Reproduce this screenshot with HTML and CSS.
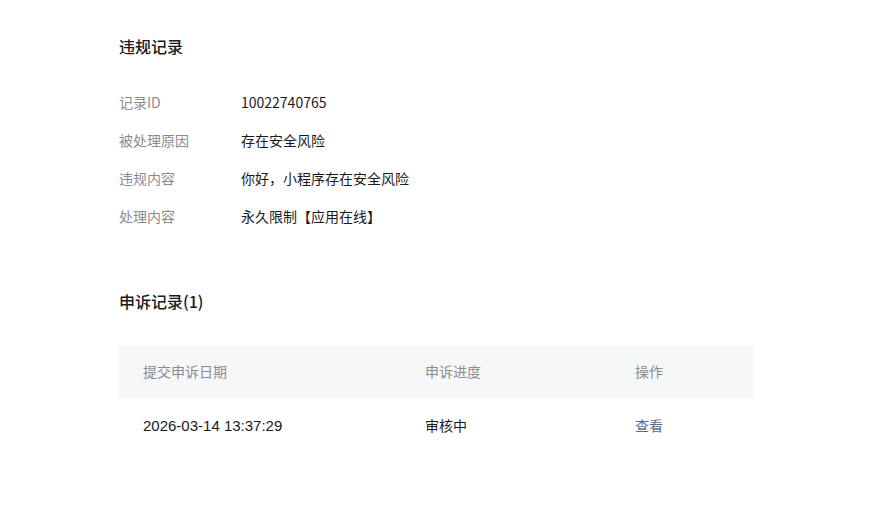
FILE: index.html
```html
<!DOCTYPE html>
<html lang="zh-CN">
<head>
  <meta charset="UTF-8" />
  <meta name="viewport" content="width=device-width, initial-scale=1" />
  <title>违规记录</title>
  <link rel="stylesheet" href="styles.css">
</head>
<body>
  <div class="page">
    <!-- 违规记录 -->
    <h2 class="titulo">违规记录</h2>
    <div class="info">
      <div class="info-linha"><span class="rotulo">记录ID</span><span class="valor">10022740765</span></div>
      <div class="info-linha"><span class="rotulo">被处理原因</span><span class="valor">存在安全风险</span></div>
      <div class="info-linha"><span class="rotulo">违规内容</span><span class="valor">你好，小程序存在安全风险</span></div>
      <div class="info-linha"><span class="rotulo">处理内容</span><span class="valor">永久限制【应用在线】</span></div>
    </div>

    <!-- 申诉记录 -->
    <h2 class="titulo titulo-apelo">申诉记录(1)</h2>
    <table class="tabela">
      <thead>
        <tr>
          <th class="col-data">提交申诉日期</th>
          <th class="col-status">申诉进度</th>
          <th>操作</th>
        </tr>
      </thead>
      <tbody>
        <tr>
          <td class="col-data data">2026-03-14 13:37:29</td>
          <td class="col-status">审核中</td>
          <td><a href="#" class="link">查看</a></td>
        </tr>
      </tbody>
    </table>
  </div>
</body>
</html>
```

FILE: styles.css
```css
body {
  margin: 0;
  background: #fff;
  font-family: "Noto Sans CJK SC", "Noto Sans", sans-serif;
  color: #1a1a1a;
  font-size: 14px;
}
.page {
  padding: 34px 0 40px 119px;
  width: 634px;
}
.titulo {
  margin: 0;
  font-size: 16px;
  line-height: 24px;
  font-weight: 500;
  color: #1a1a1a;
}
.info {
  margin-top: 33px;
  display: flex;
  flex-direction: column;
  gap: 16px;
}
.info-linha {
  display: flex;
  line-height: 22px;
}
.rotulo {
  width: 122px;
  color: #8c8c8c;
}
.valor {
  color: #1a1a1a;
}
.titulo-apelo {
  margin-top: 62px;
}
.tabela {
  margin-top: 33px;
  width: 100%;
  border-collapse: collapse;
}
.tabela th {
  background: #f6f7f9;
  height: 52px;
  padding: 0 0 3px 24px;
  box-sizing: border-box;
  text-align: left;
  font-weight: 400;
  color: #8c8c8c;
}
.tabela td {
  height: 54px;
  padding: 0 0 0 24px;
  text-align: left;
  color: #1a1a1a;
}
.tabela td.data {
  font-family: "Liberation Sans", Arial, sans-serif;
  font-size: 15px;
}
.col-data {
  width: 258px;
}
.col-status {
  width: 186px;
}
.link {
  color: #576b95;
  text-decoration: none;
}
```
